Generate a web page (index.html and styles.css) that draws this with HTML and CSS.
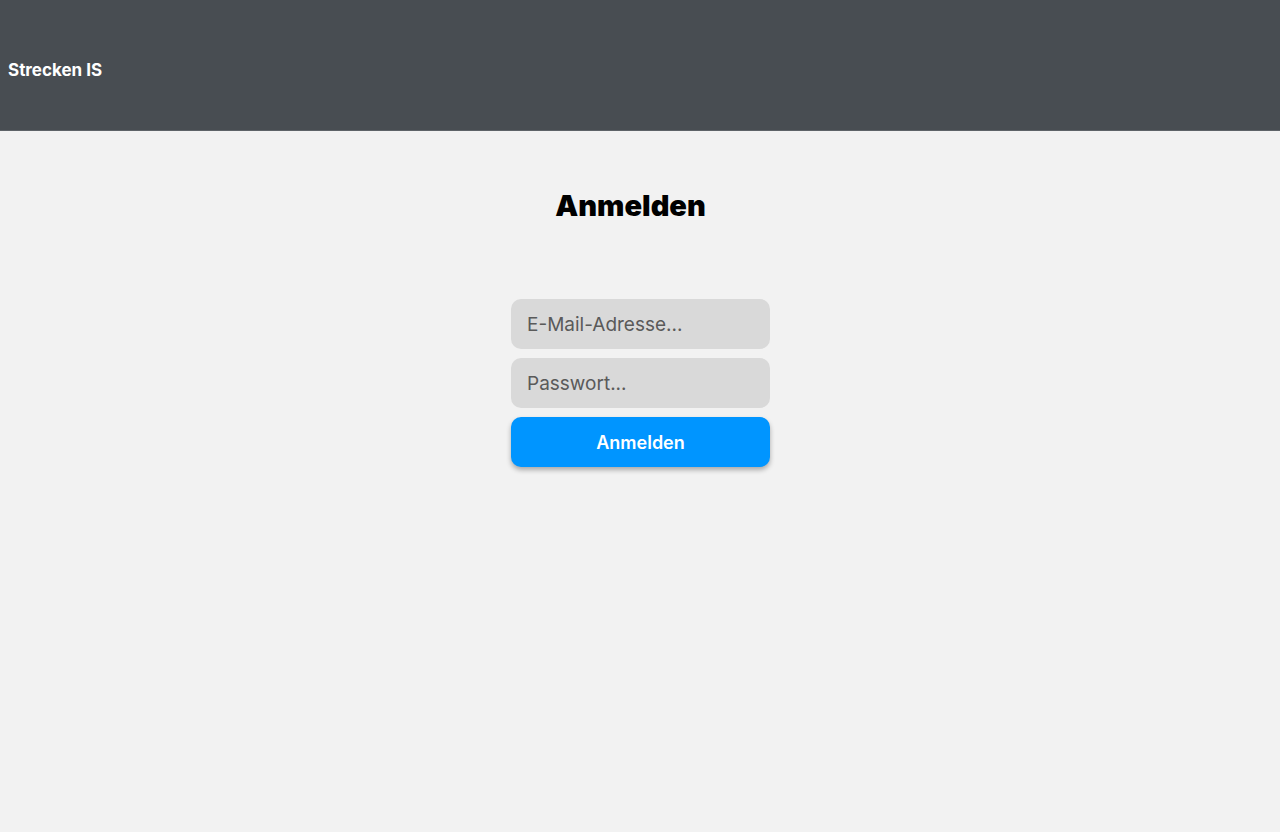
FILE: index.html
```html
<!DOCTYPE html>
<html lang="de">
<head>
<meta charset="utf-8">
<title>Anmelden</title>
<link rel="stylesheet" href="styles.css">
</head>
<body>
<header class="topbar">
  <span class="brand">Strecken IS</span>
</header>
<main class="content">
  <h1 class="title">Anmelden</h1>
  <form class="login">
    <input class="field" type="email" placeholder="E-Mail-Adresse...">
    <input class="field" type="password" placeholder="Passwort...">
    <button class="submit" type="button">Anmelden</button>
  </form>
</main>
</body>
</html>
```
FILE: styles.css
```css
* { box-sizing: border-box; }
html, body { margin: 0; height: 100%; }
body {
  background: #f2f2f2;
  font-family: Inter, "Liberation Sans", sans-serif;
}
.topbar {
  height: 131px;
  background: #484d52;
  border-bottom: 1px solid #5e6368;
  display: flex;
  align-items: center;
  padding: 9px 8px 0;
}
.brand {
  color: #fff;
  font-weight: 700;
  font-size: 17px;
}
.content {
  display: flex;
  flex-direction: column;
  align-items: center;
}
.title {
  margin: 57px 19px 0 0;
  font-size: 29px;
  font-weight: 900;
  line-height: 36px;
  color: #000;
}
.login {
  margin-top: 75px;
  width: 259px;
  margin-left: 1px;
  display: flex;
  flex-direction: column;
  gap: 9px;
}
.field {
  height: 50px;
  border: none;
  border-radius: 10px;
  background: #d9d9d9;
  padding: 0 16px;
  font-family: Inter, "Liberation Sans", sans-serif;
  font-size: 19px;
  color: #333;
  outline: none;
}
.field::placeholder { color: #5a5a5a; }
.submit {
  height: 50px;
  border: none;
  border-radius: 10px;
  background: #0095ff;
  color: #fff;
  font-family: Inter, "Liberation Sans", sans-serif;
  font-weight: 600;
  font-size: 18px;
  box-shadow: 0 3px 5px rgba(0,0,0,0.3);
}
```
